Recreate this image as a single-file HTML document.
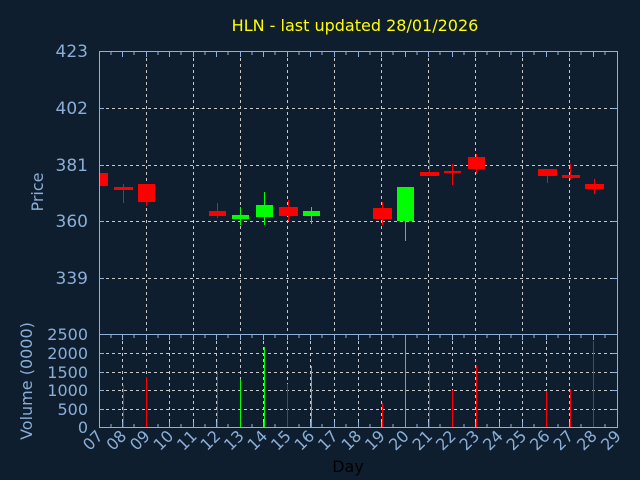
<!DOCTYPE html>
<html><head><meta charset="utf-8"><style>
html,body{margin:0;padding:0;background:#0f1e2f;}
svg{display:block;font-family:"DejaVu Sans","Liberation Sans",sans-serif;}
</style></head><body>
<svg width="640" height="480" viewBox="0 0 640 480" xmlns="http://www.w3.org/2000/svg">
<rect width="640" height="480" fill="#0f1e2f"/>
<text x="355" y="31" fill="#ffff00" font-size="16" text-anchor="middle">HLN - last updated 28/01/2026</text>
<g stroke="#c8c8c8" stroke-width="1" stroke-dasharray="3,3" fill="none">
<!-- price vertical grid -->
<path d="M146.5 52V334M193.5 52V334M240.5 52V334M287.5 52V334M334.5 52V334M381.5 52V334M428.5 52V334M475.5 52V334M522.5 52V334M569.5 52V334"/>
<!-- price horizontal grid -->
<path d="M100 108.5H617M100 165.5H617M100 221.5H617M100 278.5H617"/>
<!-- volume vertical grid -->
<path d="M122.5 335V427M146.5 335V427M169.5 335V427M193.5 335V427M216.5 335V427M240.5 335V427M263.5 335V427M287.5 335V427M310.5 335V427M334.5 335V427M358.5 335V427M381.5 335V427M405.5 335V427M428.5 335V427M452.5 335V427M475.5 335V427M499.5 335V427M522.5 335V427M546.5 335V427M569.5 335V427M593.5 335V427"/>
<path d="M100 353.5H617M100 372.5H617M100 390.5H617M100 409.5H617"/>
</g>
<g stroke="#8fb0d8" stroke-width="1" fill="none">
<path d="M99.5 51.5H617.5V427.5H99.5Z"/>
<path d="M99.5 334.5H617.5"/>
<!-- y ticks -->
<path d="M99 108.5h5M99 165.5h5M99 221.5h5M99 278.5h5M617 108.5h-5M617 165.5h-5M617 221.5h-5M617 278.5h-5"/>
<path d="M99 353.5h5M99 372.5h5M99 390.5h5M99 409.5h5M617 353.5h-5M617 372.5h-5M617 390.5h-5M617 409.5h-5"/>
<!-- x ticks top -->
<path d="M111 52v3M122.5 52v5M134 52v3M146.5 52v5M158 52v3M169.5 52v5M181 52v3M193.5 52v5M205 52v3M216.5 52v5M228 52v3M240.5 52v5M252 52v3M263.5 52v5M275 52v3M287.5 52v5M299 52v3M310.5 52v5M322 52v3M334.5 52v5M346 52v3M358.5 52v5M370 52v3M381.5 52v5M393 52v3M405.5 52v5M417 52v3M428.5 52v5M440 52v3M452.5 52v5M464 52v3M475.5 52v5M487 52v3M499.5 52v5M511 52v3M522.5 52v5M534 52v3M546.5 52v5M558 52v3M569.5 52v5M581 52v3M593.5 52v5M605 52v3"/>
<path d="M111 335v3M122.5 335v5M134 335v3M146.5 335v5M158 335v3M169.5 335v5M181 335v3M193.5 335v5M205 335v3M216.5 335v5M228 335v3M240.5 335v5M252 335v3M263.5 335v5M275 335v3M287.5 335v5M299 335v3M310.5 335v5M322 335v3M334.5 335v5M346 335v3M358.5 335v5M370 335v3M381.5 335v5M393 335v3M405.5 335v5M417 335v3M428.5 335v5M440 335v3M452.5 335v5M464 335v3M475.5 335v5M487 335v3M499.5 335v5M511 335v3M522.5 335v5M534 335v3M546.5 335v5M558 335v3M569.5 335v5M581 335v3M593.5 335v5M605 335v3"/>
<path d="M111 427v-3M122.5 427v-5M134 427v-3M146.5 427v-5M158 427v-3M169.5 427v-5M181 427v-3M193.5 427v-5M205 427v-3M216.5 427v-5M228 427v-3M240.5 427v-5M252 427v-3M263.5 427v-5M275 427v-3M287.5 427v-5M299 427v-3M310.5 427v-5M322 427v-3M334.5 427v-5M346 427v-3M358.5 427v-5M370 427v-3M381.5 427v-5M393 427v-3M405.5 427v-5M417 427v-3M428.5 427v-5M440 427v-3M452.5 427v-5M464 427v-3M475.5 427v-5M487 427v-3M499.5 427v-5M511 427v-3M522.5 427v-5M534 427v-3M546.5 427v-5M558 427v-3M569.5 427v-5M581 427v-3M593.5 427v-5M605 427v-3"/>
</g>
<!-- y labels -->
<g fill="#8aaed6" font-size="17" text-anchor="end">
<text x="88" y="57">423</text><text x="88" y="114">402</text><text x="88" y="171">381</text><text x="88" y="227">360</text><text x="88" y="284">339</text>
</g>
<g fill="#8aaed6" font-size="16" text-anchor="end">
<text x="88" y="340">2500</text><text x="88" y="359">2000</text><text x="88" y="378">1500</text><text x="88" y="396">1000</text><text x="88" y="415">500</text><text x="88" y="433">0</text>
</g>
<text transform="translate(43,192) rotate(-90)" fill="#8aaed6" font-size="16" text-anchor="middle">Price</text>
<text transform="translate(32,381) rotate(-90)" fill="#8aaed6" font-size="16" text-anchor="middle">Volume (0000)</text>
<text x="348" y="472" fill="#000" font-size="16" text-anchor="middle">Day</text>
<!-- x labels -->
<g fill="#8aaed6" font-size="16" text-anchor="end">
<text transform="translate(104,437) rotate(-45)">07</text>
<text transform="translate(127.5,437) rotate(-45)">08</text>
<text transform="translate(151,437) rotate(-45)">09</text>
<text transform="translate(174.5,437) rotate(-45)">10</text>
<text transform="translate(198,437) rotate(-45)">11</text>
<text transform="translate(221.5,437) rotate(-45)">12</text>
<text transform="translate(245,437) rotate(-45)">13</text>
<text transform="translate(268.5,437) rotate(-45)">14</text>
<text transform="translate(292,437) rotate(-45)">15</text>
<text transform="translate(315.5,437) rotate(-45)">16</text>
<text transform="translate(339,437) rotate(-45)">17</text>
<text transform="translate(362.5,437) rotate(-45)">18</text>
<text transform="translate(386,437) rotate(-45)">19</text>
<text transform="translate(410,437) rotate(-45)">20</text>
<text transform="translate(433.5,437) rotate(-45)">21</text>
<text transform="translate(457,437) rotate(-45)">22</text>
<text transform="translate(480.5,437) rotate(-45)">23</text>
<text transform="translate(504,437) rotate(-45)">24</text>
<text transform="translate(527.5,437) rotate(-45)">25</text>
<text transform="translate(551,437) rotate(-45)">26</text>
<text transform="translate(574.5,437) rotate(-45)">27</text>
<text transform="translate(598,437) rotate(-45)">28</text>
<text transform="translate(622,437) rotate(-45)">29</text>
</g>
<!-- candles red -->
<g fill="#ff0000">
<rect x="100" y="173" width="8" height="13"/>
<rect x="123" y="184" width="1" height="19"/><rect x="114" y="187" width="19" height="3"/>
<rect x="146" y="184" width="1" height="22"/><rect x="138" y="184" width="17" height="18"/>
<rect x="217" y="203" width="1" height="15"/><rect x="209" y="211" width="17" height="5"/>
<rect x="288" y="200" width="1" height="21"/><rect x="279" y="207" width="19" height="9"/>
<rect x="382" y="202" width="1" height="23"/><rect x="373" y="208" width="19" height="11"/>
<rect x="429" y="156" width="1" height="20"/><rect x="420" y="172" width="19" height="4"/>
<rect x="452" y="164" width="1" height="21"/><rect x="444" y="171" width="17" height="2"/>
<rect x="476" y="154" width="1" height="20"/><rect x="468" y="157" width="17" height="12"/>
<rect x="547" y="169" width="1" height="14"/><rect x="538" y="169" width="19" height="7"/>
<rect x="570" y="164" width="1" height="16"/><rect x="562" y="175" width="18" height="3"/>
<rect x="594" y="179" width="1" height="15"/><rect x="585" y="184" width="19" height="5"/>
</g>
<g fill="#00ff00">
<rect x="240" y="207" width="1" height="18"/><rect x="232" y="215" width="17" height="4"/>
<rect x="264" y="192" width="1" height="33"/><rect x="256" y="205" width="17" height="12"/>
<rect x="311" y="207" width="1" height="17"/><rect x="303" y="211" width="17" height="5"/>
<rect x="405" y="187" width="1" height="54"/><rect x="397" y="187" width="17" height="34"/>
</g>
<!-- volume -->
<g fill="#ff0000">
<rect x="123" y="385" width="1" height="42"/>
<rect x="146" y="377" width="1" height="50"/>
<rect x="217" y="372" width="1" height="55"/>
<rect x="287" y="384" width="1" height="43"/>
<rect x="382" y="403" width="1" height="24"/>
<rect x="429" y="362" width="1" height="65"/>
<rect x="452" y="390" width="1" height="37"/>
<rect x="476" y="365" width="1" height="62"/>
<rect x="546" y="391" width="1" height="36"/>
<rect x="570" y="389" width="1" height="38"/>
<rect x="593" y="341" width="1" height="86"/>
</g>
<g fill="#00ff00">
<rect x="240" y="379" width="1" height="48"/>
<rect x="264" y="347" width="1" height="80"/>
<rect x="311" y="366" width="1" height="61"/>
<rect x="405" y="335" width="1" height="92"/>
</g>
</svg>
</body></html>
